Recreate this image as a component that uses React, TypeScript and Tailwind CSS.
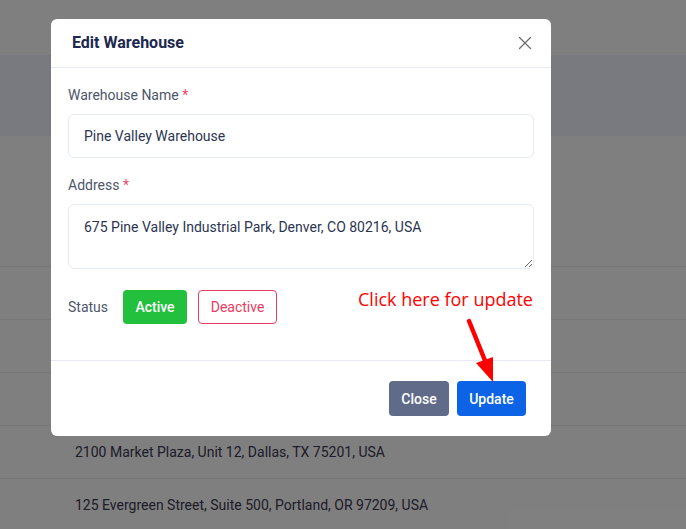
import { X } from "lucide-react";

const rows = [
  "",
  "",
  "",
  "2100 Market Plaza, Unit 12, Dallas, TX 75201, USA",
  "125 Evergreen Street, Suite 500, Portland, OR 97209, USA",
];

export default function App() {
  return (
    <div className="relative h-[529px] w-[686px] overflow-hidden bg-white font-['Roboto',sans-serif]">
      {/* page behind the dialog */}
      <div className="h-[55px]" />
      <div className="h-[81px] bg-[#f3f5fe]" />
      <div className="h-[131px] border-b border-[#eceef2]" />
      {rows.map((text, i) => (
        <div
          key={i}
          className="flex h-[53px] items-center border-b border-[#eceef2] pl-[75px] text-sm text-[#3a3850]"
        >
          {text}
        </div>
      ))}

      {/* backdrop */}
      <div className="absolute inset-0 bg-black/50" />

      {/* dialog */}
      <div className="absolute left-[51px] top-[19px] w-[500px] rounded-md bg-white">
        <div className="flex h-[49px] items-center justify-between border-b border-[#e6e8f2] pl-[21px] pr-[15px]">
          <h2 className="text-base font-bold text-[#1b2850]">Edit Warehouse</h2>
          <X size={22} strokeWidth={1.3} className="text-[#6e6e6e]" />
        </div>

        <div className="px-[17px] pb-[36px] pt-[17px]">
          <label className="block text-sm leading-5 text-[#4d566b]">
            Warehouse Name <span className="text-[#f0466b]">*</span>
          </label>
          <div className="mt-[9px] flex h-[44px] items-center rounded-md border border-[#e7ebf3] px-[15px] text-sm text-[#2b3552]">
            Pine Valley Warehouse
          </div>

          <label className="mt-[17px] block text-sm leading-5 text-[#4d566b]">
            Address <span className="text-[#f0466b]">*</span>
          </label>
          <textarea
            readOnly
            defaultValue="675 Pine Valley Industrial Park, Denver, CO 80216, USA"
            className="mt-[9px] block h-[65px] w-full rounded-md border border-[#e7ebf3] px-[15px] py-[12px] text-sm leading-5 text-[#2b3552] outline-none"
          />

          <div className="mt-[21px] flex items-center">
            <span className="mr-[15px] text-sm text-[#4d566b]">Status</span>
            <button className="h-[34px] w-[64px] rounded bg-[#22c03c] text-sm font-medium text-white">
              Active
            </button>
            <button className="ml-[11px] h-[34px] w-[79px] rounded border border-[#ea3a62] text-sm text-[#ea3a62]">
              Deactive
            </button>
          </div>
        </div>

        <div className="flex h-[76px] items-center justify-end gap-[8px] border-t border-[#e6e8f2] pr-[25px]">
          <button className="h-[35px] w-[60px] rounded bg-[#5f6b88] text-sm font-medium text-white">
            Close
          </button>
          <button className="h-[35px] w-[69px] rounded bg-[#0c63e6] text-sm font-medium text-white">
            Update
          </button>
        </div>
      </div>

      {/* annotation */}
      <div className="absolute left-[358px] top-[287px] font-['Open_Sans',sans-serif] text-[18px] leading-6 text-[#ff0000]">
        Click here for update
      </div>
      <svg className="absolute left-0 top-0" width="686" height="529">
        <line x1="469" y1="321" x2="486" y2="363" stroke="#ff0000" strokeWidth="4.5" strokeLinecap="round" />
        <polygon points="476,363 493,357 493,382" fill="#ff0000" />
      </svg>
    </div>
  );
}
